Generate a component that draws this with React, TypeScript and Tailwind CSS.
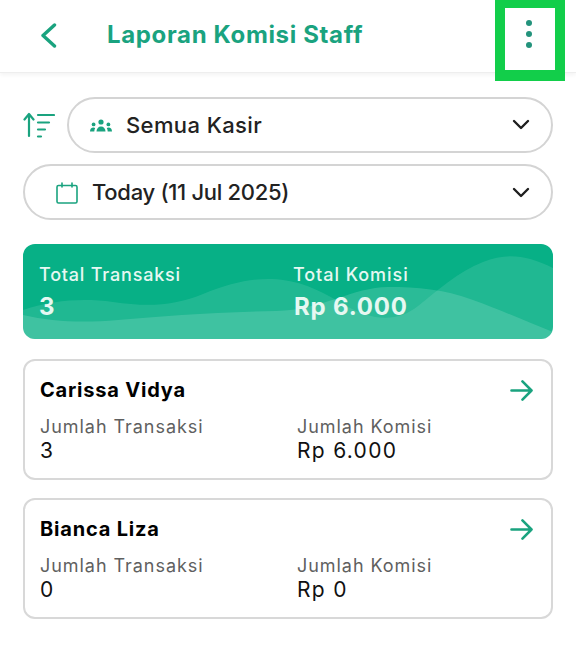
import React from 'react';

const GREEN = '#1AA37F';

const ChevronDown = () => (
  <svg width="18" height="12" viewBox="0 0 18 12" fill="none" stroke="#1f1f1f" strokeWidth="2.4" strokeLinecap="round" strokeLinejoin="round">
    <path d="M2 2l7 7 7-7" />
  </svg>
);

const SortIcon = () => (
  <svg width="32" height="26" viewBox="0 0 32 26" fill="none" stroke={GREEN} strokeWidth="2.2" strokeLinecap="round" strokeLinejoin="round">
    <path d="M6 24V2M1.500 7.500L6 2l4.500 5.500" />
    <path d="M15 3h16M15 10.500h11M15 17.500h7M15 24.500h3" />
  </svg>
);

const PeopleIcon = () => (
  <svg width="22" height="13" viewBox="0 0 22 13" fill={GREEN}>
    <circle cx="11" cy="3" r="2.6" />
    <path d="M6.5 12.5c0-3 2-5 4.5-5s4.5 2 4.5 5z" />
    <circle cx="3.6" cy="5.4" r="1.9" />
    <path d="M0 12.5c0-2.4 1.4-4 3.4-4 .7 0 1.3.2 1.800.5-.6 1-.9 2.200-.9 3.500z" />
    <circle cx="18.400" cy="5.400" r="1.900" />
    <path d="M22 12.500c0-2.400-1.400-4-3.400-4-.7 0-1.300.2-1.800.5.6 1 .9 2.200.9 3.500z" />
  </svg>
);

const CalendarIcon = () => (
  <svg width="22" height="22" viewBox="0 0 22 22" fill="none" stroke={GREEN} strokeWidth="1.600" strokeLinecap="round" strokeLinejoin="round">
    <rect x="1" y="3.500" width="20" height="17.500" rx="1.500" />
    <path d="M6 1v4M16 1v4" />
  </svg>
);

const ArrowRight = () => (
  <svg width="23" height="21" viewBox="0 0 24 22" fill="none" stroke={GREEN} strokeWidth="2.700" strokeLinecap="round" strokeLinejoin="round">
    <path d="M1.500 11h21M13 1.500l9.500 9.500-9.500 9.500" />
  </svg>
);

const Pill = ({ icon, label, className }: { icon: React.ReactNode; label: string; className: string }) => (
  <div className={`flex h-[56px] flex-1 items-center justify-between rounded-full border-2 border-[#d4d4d4] bg-white pr-[21px] ${className}`}>
    <div className="flex items-center gap-[14px]">
      {icon}
      <span className="text-[22px] font-medium text-[#222222]">{label}</span>
    </div>
    <ChevronDown />
  </div>
);

const Pair = ({ label, value }: { label: string; value: string }) => (
  <div>
    <div className="text-[18px] leading-[24px] tracking-[0.95px] text-[#5f5f5f]">{label}</div>
    <div className="text-[21px] leading-[24px] tracking-[1.3px] text-[#111111]">{value}</div>
  </div>
);

const StaffCard = ({ name, count, amount }: { name: string; count: string; amount: string }) => (
  <div className="flex h-[121px] flex-col rounded-[12px] border-2 border-[#d8d8d8] bg-white pt-[16px] pr-[18px] pl-[15px]">
    <div className="flex items-center justify-between">
      <span className="text-[20px] leading-[26px] font-bold tracking-[0.8px] text-black">{name}</span>
      <ArrowRight />
    </div>
    <div className="mt-[12px] grid grid-cols-[257px_1fr]">
      <Pair label="Jumlah Transaksi" value={count} />
      <Pair label="Jumlah Komisi" value={amount} />
    </div>
  </div>
);

export default function App() {
  return (
    <div className="relative h-[657px] w-[576px] overflow-hidden bg-white font-['Inter',sans-serif]">
      <header className="flex h-[73px] items-center border-b border-[#eeeeee] pb-[2px] shadow-[0_2px_4px_rgba(0,0,0,0.05)]">
        <svg className="ml-[40px]" width="17" height="25" viewBox="0 0 17 25" fill="none" stroke={GREEN} strokeWidth="3.400" strokeLinecap="round" strokeLinejoin="round">
          <path d="M14.500 2L3 12.500 14.500 23" />
        </svg>
        <h1 className="ml-[50px] text-[24px] font-bold tracking-[0.65px] text-[#1AA37F]">Laporan Komisi Staff</h1>
      </header>

      {/* green frame marking the menu button */}
      <div className="absolute top-0 left-[495px] flex h-[81px] w-[70px] justify-center border-x-[10px] border-t-[8px] border-b-[11px] border-[#12CE4A] bg-white pt-[12px] pr-[3px]">
        <div className="flex flex-col gap-[5px]">
          <span className="h-[6px] w-[6px] rounded-full bg-[#23937C]" />
          <span className="h-[6px] w-[6px] rounded-full bg-[#23937C]" />
          <span className="h-[6px] w-[6px] rounded-full bg-[#23937C]" />
        </div>
      </div>

      <main className="flex flex-col px-[23px] pt-[24px]">
        <div className="flex items-center gap-[12px]">
          <SortIcon />
          <Pill icon={<PeopleIcon />} label="Semua Kasir" className="pl-[21px] tracking-[0.4px]" />
        </div>
        <div className="mt-[11px] flex">
          <Pill icon={<CalendarIcon />} label="Today (11 Jul 2025)" className="pt-[1px] pl-[31px] tracking-[-0.3px]" />
        </div>

        <section className="relative mt-[24px] h-[95px] overflow-hidden rounded-[12px] bg-[#07B086]">
          <svg className="absolute inset-0" width="530" height="95" viewBox="0 0 530 95" fill="#ffffff">
            <path fillOpacity="0.1" d="M0 66C30 56 60 54 90 58C125 63 150 62 180 50C205 40 225 35 245 35C270 35 290 42 320 60C350 78 375 78 395 62C415 46 435 28 460 18C485 8 505 12 530 24V95H0Z" />
            <path fillOpacity="0.14" d="M0 71C30 78 60 79 95 76C140 72 190 68 253 67C300 66 330 43 365 43C395 43 420 45 450 56C480 67 505 78 530 88V95H0Z" />
          </svg>
          <div className="relative grid grid-cols-[255px_1fr] pt-[19px] pl-[16px]">
            <div>
              <div className="text-[18px] leading-[24px] font-medium tracking-[0.8px] text-[#E6F8F2]">Total Transaksi</div>
              <div className="mt-[4px] text-[24px] leading-[32px] font-bold text-[#E6F8F2]">3</div>
            </div>
            <div className="-ml-[1px]">
              <div className="text-[18px] leading-[24px] font-medium tracking-[0.95px] text-[#E6F8F2]">Total Komisi</div>
              <div className="mt-[4px] ml-[1px] text-[24px] leading-[32px] font-bold tracking-[0.8px] text-[#E6F8F2]">Rp 6.000</div>
            </div>
          </div>
        </section>

        <div className="mt-[20px] flex flex-col gap-[18px]">
          <StaffCard name="Carissa Vidya" count="3" amount="Rp 6.000" />
          <StaffCard name="Bianca Liza" count="0" amount="Rp 0" />
        </div>
      </main>
    </div>
  );
}
